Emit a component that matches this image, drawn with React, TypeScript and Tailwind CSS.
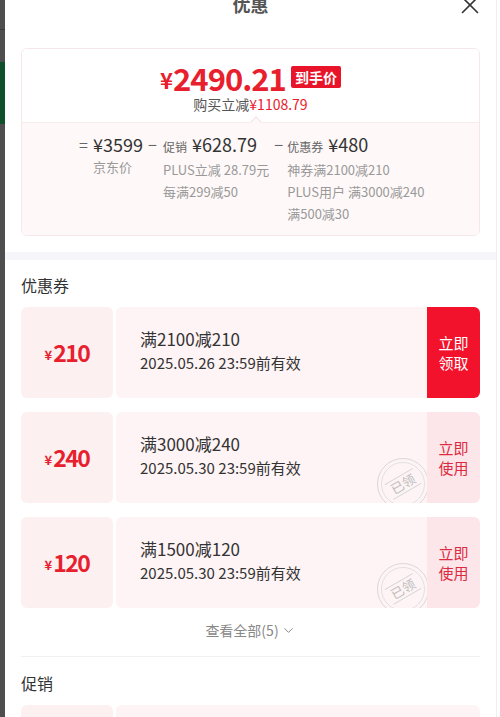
import { X, ChevronDown } from "lucide-react";

const coupons = [
  { amount: "210", title: "满2100减210", date: "2025.05.26 23:59前有效", taken: false },
  { amount: "240", title: "满3000减240", date: "2025.05.30 23:59前有效", taken: true },
  { amount: "120", title: "满1500减120", date: "2025.05.30 23:59前有效", taken: true },
];

function Stamp() {
  return (
    <div className="absolute right-[-2px] bottom-[-7px] w-[52px] h-[52px] rounded-full border-[1.5px] border-[#d8d8d8] flex items-center justify-center">
      <div className="w-[44px] h-[44px] rounded-full border border-[#e0e0e0] flex items-center justify-center">
        <span className="-rotate-[30deg] border-y border-[#d4d4d4] px-[3px] text-[13px] leading-[16px] text-[#bdbdbd]">
          已领
        </span>
      </div>
    </div>
  );
}

function CouponCard({ amount, title, date, taken }: (typeof coupons)[number]) {
  return (
    <div className="flex h-[91px]">
      <div className="w-[92px] rounded-[6px] bg-[#fdf0f1] flex items-center justify-center text-[#e8202e] font-bold">
        <span className="text-[13px] mt-[5px] mr-[1px]">¥</span>
        <span className="text-[23px] leading-none tracking-[-1.5px]">{amount}</span>
      </div>
      <div className="ml-[3px] flex-1 flex rounded-[6px] overflow-hidden">
        <div className="relative flex-1 bg-[#fef4f5] pl-[24px] pb-[3px] flex flex-col justify-center overflow-hidden">
          <div className="text-[17px] leading-[24px] text-[#333]">{title}</div>
          <div className="text-[15px] leading-[24px] text-[#333]">{date}</div>
          {taken && <Stamp />}
        </div>
        <div
          className={
            taken
              ? "w-[53px] bg-[#fde6ea] text-[#dc2b40] flex flex-col items-center justify-center text-[15px] leading-[20px]"
              : "w-[53px] bg-[#f2122b] text-white flex flex-col items-center justify-center text-[15px] leading-[20px]"
          }
        >
          <span>立即</span>
          <span>{taken ? "使用" : "领取"}</span>
        </div>
      </div>
    </div>
  );
}

export default function App() {
  return (
    <div className="w-[500px] h-[717px] overflow-hidden flex bg-white font-['Noto_Sans_CJK_SC','Noto_Sans',sans-serif]">
      {/* page behind the sheet */}
      <div className="w-[5px] shrink-0 bg-[#4e4e4e]">
        <div className="h-[30px] border-b border-[#3a3a3a]" />
        <div className="mt-[32px] h-[62px] bg-[#0f4f2c]" />
      </div>

      <div className="flex-1 min-w-0">
        {/* header */}
        <div className="relative -mt-[13px] h-[34px] flex items-center justify-center">
          <span className="text-[18px] font-bold text-[#555]">优惠</span>
          <X size={30} strokeWidth={1.3} className="absolute right-[11px] top-[3px] text-[#333]" />
        </div>

        {/* price summary */}
        <div className="mx-4 mt-[27px] rounded-[6px] border border-[#f6e8ea] overflow-hidden">
          <div className="flex flex-col items-center pt-[11px] pb-[8px] bg-white">
            <div className="flex items-center h-[34px] text-[#e8202e] font-bold">
              <span className="text-[22px] mt-[4px]">¥</span>
              <span className="text-[31px] leading-none tracking-[-1px]">2490.21</span>
              <span className="ml-[5px] bg-[#e8142a] text-white text-[14px] leading-[22px] px-[4px] rounded-[2px]">到手价</span>
            </div>
            <div className="text-[14px] leading-[20px] text-[#555]">
              购买立减<span className="text-[#e8202e]">¥1108.79</span>
            </div>
          </div>
          <div className="relative bg-[#fef8f8] border-t border-[#f8eced] pt-[9px] pb-[10px] pl-[57px] flex gap-[5px]">
            <div className="absolute left-[230px] -top-[5px] w-[8px] h-[8px] rotate-45 bg-[#fef8f8] border-l border-t border-[#f3e3e5]" />
            <div className="flex">
              <span className="w-[14px] text-[16px] leading-[24px] text-[#666]">=</span>
              <div className="flex flex-col">
                <span className="text-[18px] leading-[24px] text-[#333]">¥3599</span>
                <span className="text-[13px] leading-[22px] text-[#999]">京东价</span>
              </div>
            </div>
            <div className="flex">
              <span className="w-[15px] text-[16px] leading-[24px] text-[#666]">−</span>
              <div className="flex flex-col">
                <span className="leading-[24px] text-[#333]">
                  <span className="text-[12px] text-[#666] mr-[5px]">促销</span>
                  <span className="text-[18px]">¥628.79</span>
                </span>
                <span className="text-[13px] leading-[22px] text-[#999]">PLUS立减 28.79元</span>
                <span className="text-[13px] leading-[22px] text-[#999]">每满299减50</span>
              </div>
            </div>
            <div className="flex">
              <span className="w-[13px] text-[16px] leading-[24px] text-[#666]">−</span>
              <div className="flex flex-col">
                <span className="leading-[24px] text-[#333]">
                  <span className="text-[12px] text-[#666] mr-[5px]">优惠券</span>
                  <span className="text-[18px]">¥480</span>
                </span>
                <span className="text-[13px] leading-[22px] text-[#999]">神券满2100减210</span>
                <span className="text-[13px] leading-[22px] text-[#999]">PLUS用户 满3000减240</span>
                <span className="text-[13px] leading-[22px] text-[#999]">满500减30</span>
              </div>
            </div>
          </div>
        </div>

        <div className="mt-4 h-[8px] bg-[#f6f6fa]" />

        {/* coupons */}
        <div className="px-4">
          <div className="mt-[14px] text-[16px] leading-[22px] text-[#333]">优惠券</div>
          <div className="mt-[11px] flex flex-col gap-[14px]">
            {coupons.map((c) => (
              <CouponCard key={c.title} {...c} />
            ))}
          </div>
          <div className="mt-[12px] flex items-center justify-center text-[14px] leading-[20px] text-[#888]">
            查看全部(5)
            <ChevronDown size={15} strokeWidth={1.6} className="ml-[2px]" />
          </div>
          <div className="mt-[16px] h-px bg-[#f0f0f0]" />
          <div className="mt-[15px] text-[16px] leading-[22px] text-[#333]">促销</div>
          <div className="mt-[11px] flex h-[60px]">
            <div className="w-[92px] rounded-[6px] bg-[#fdf0f1]" />
            <div className="ml-[3px] flex-1 rounded-[6px] bg-[#fef4f5]" />
          </div>
        </div>
      </div>

      <div className="w-[4px] shrink-0 border-l border-[#eeeeee] bg-white" />
    </div>
  );
}
